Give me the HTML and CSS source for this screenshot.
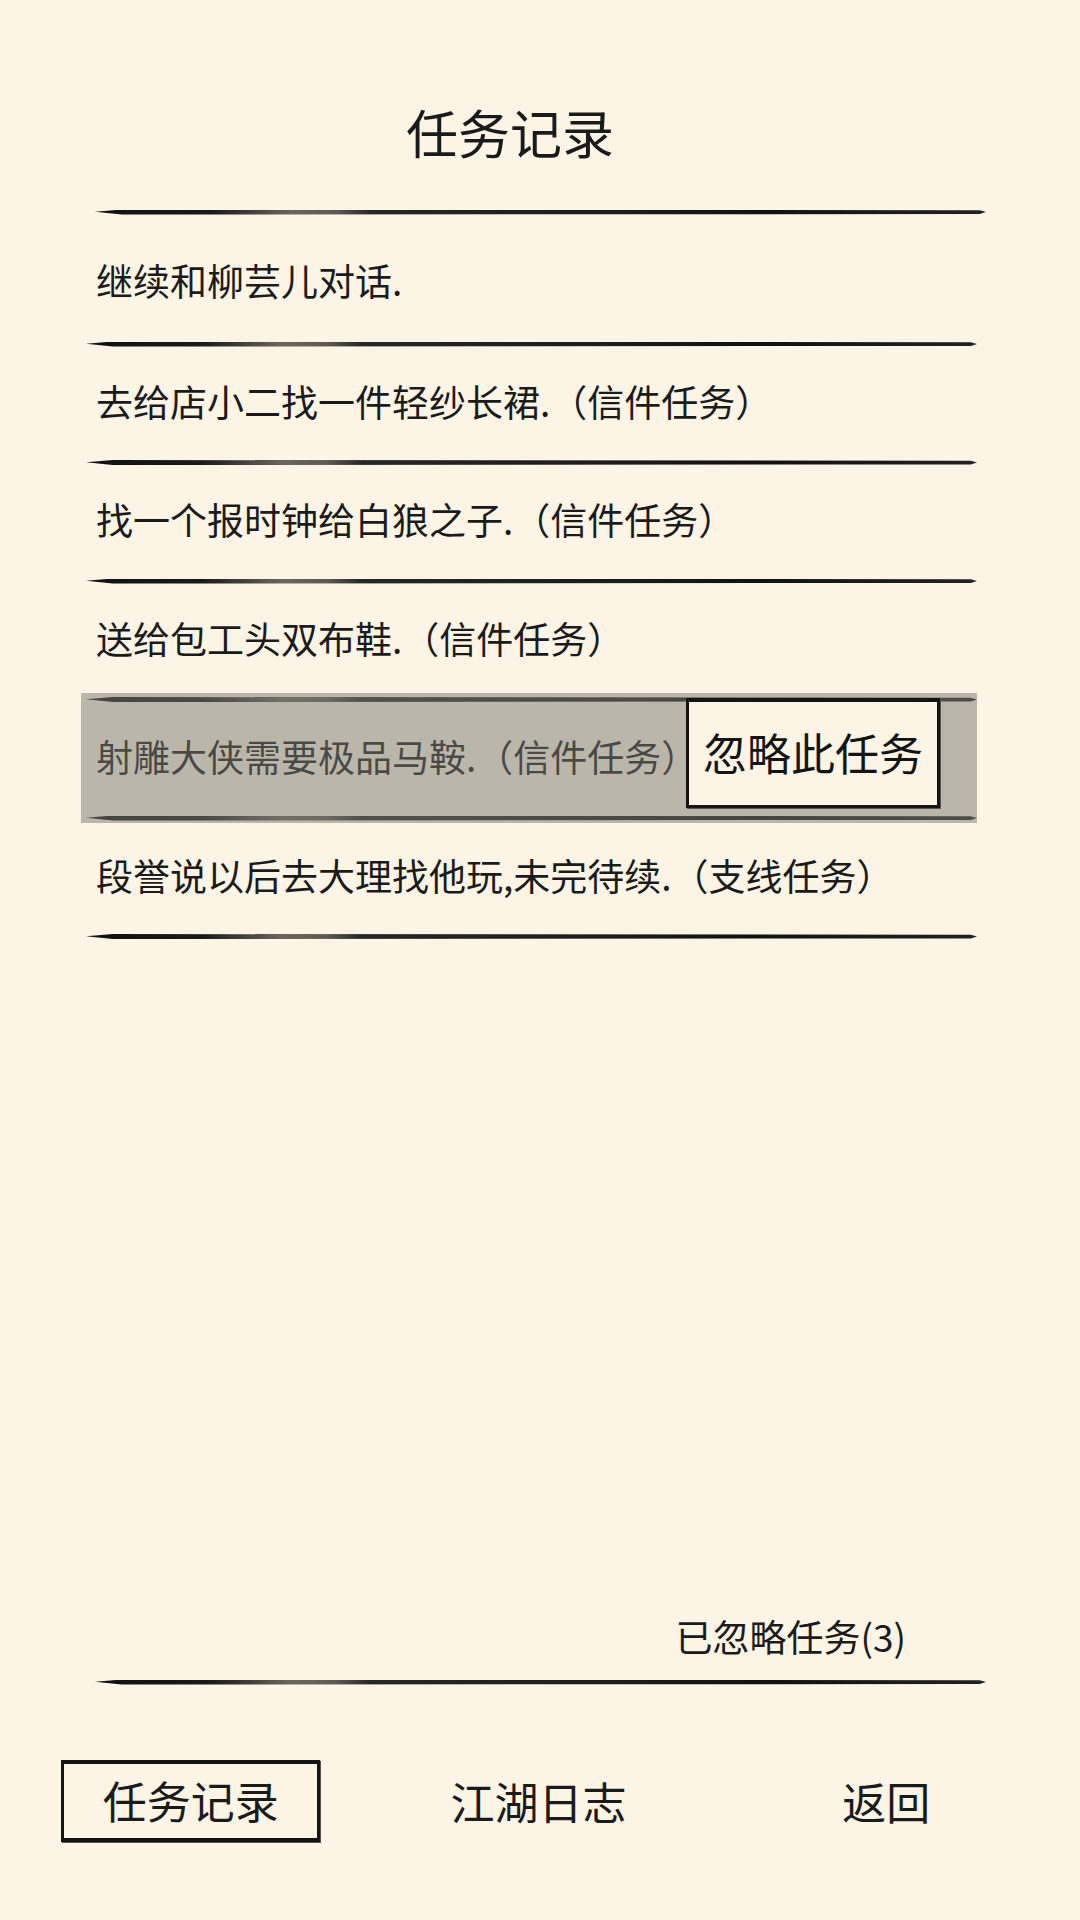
FILE: index.html
```html
<!DOCTYPE html>
<html lang="zh">
<head>
<meta charset="utf-8">
<title>任务记录</title>
<link rel="stylesheet" href="styles.css">
</head>
<body>
<div class="page">
  <header class="header"><h1 class="title">任务记录</h1></header>
  <div class="brush brush-wide"></div>
  <div class="tasks">
    <div class="task task-first">继续和柳芸儿对话.</div>
    <div class="brush"></div>
    <div class="task">去给店小二找一件轻纱长裙.（信件任务）</div>
    <div class="brush"></div>
    <div class="task">找一个报时钟给白狼之子.（信件任务）</div>
    <div class="brush"></div>
    <div class="task">送给包工头双布鞋.（信件任务）</div>
    <div class="brush"></div>
    <div class="task task-selected">射雕大侠需要极品马鞍.（信件任务）<div class="menu">忽略此任务</div></div>
    <div class="brush"></div>
    <div class="task">段誉说以后去大理找他玩,未完待续.（支线任务）</div>
    <div class="brush"></div>
  </div>
  <div class="spacer"></div>
  <div class="ignored">已忽略任务(3)</div>
  <div class="brush brush-wide"></div>
  <nav class="tabs">
    <div class="tab"><span class="tab-label tab-active">任务记录</span></div>
    <div class="tab"><span class="tab-label">江湖日志</span></div>
    <div class="tab"><span class="tab-label">返回</span></div>
  </nav>
</div>
</body>
</html>
```
FILE: styles.css
```css
* { box-sizing: border-box; }
html, body {
  margin: 0;
  padding: 0;
  background: #fcf5e5;
}
body {
  font-family: "Noto Sans CJK SC", "Noto Sans", sans-serif;
  color: #1b1b1b;
}
.page {
  width: 1080px;
  height: 1920px;
  display: flex;
  flex-direction: column;
}
.header {
  height: 209.5px;
  padding-top: 101px;
  padding-right: 60px;
  text-align: center;
}
.title {
  margin: 0;
  font-size: 52px;
  line-height: 62px;
  font-weight: 400;
}
.brush {
  height: 5px;
  background: linear-gradient(90deg, #111 0%, #1a1a1a 13%, #3e3b37 17%, #6a665e 22%, #5e5a53 27%, #262626 31%, #1c1c1c 60%, #111 75%, #222 100%);
  clip-path: polygon(0 45%, 3% 0, 99.3% 15%, 100% 50%, 99.3% 90%, 3% 100%);
}
.brush-wide {
  margin: 0 94px 0 95px;
}
.tasks {
  margin: 0 103px 0 86px;
  display: flex;
  flex-direction: column;
}
.task {
  position: relative;
  height: 113.5px;
  padding-left: 10px;
  padding-bottom: 4px;
  display: flex;
  align-items: center;
  font-size: 37px;
  line-height: 1;
  white-space: nowrap;
}
.task-first {
  height: 127px;
  padding-top: 8px;
}
.task-selected {
  color: #1b1b1b;
}
.task-selected::before {
  content: "";
  position: absolute;
  left: -5px;
  right: 0;
  top: -9px;
  bottom: -7.5px;
  background: rgba(122, 119, 112, 0.5);
  z-index: 1;
}
.menu {
  position: absolute;
  left: 600px;
  top: -4px;
  width: 254px;
  height: 110px;
  background: #fcf5e5;
  border: 3px solid #141414;
  border-top-width: 4px;
  box-shadow: 1px 1px 0 #555;
  display: flex;
  align-items: center;
  justify-content: center;
  padding-bottom: 4px;
  font-size: 44px;
  color: #141414;
  z-index: 2;
}
.spacer { flex: 1; }
.ignored {
  font-size: 37px;
  line-height: 47px;
  text-align: right;
  padding-right: 174px;
  margin-bottom: 20px;
}
.tabs {
  margin-top: 75.5px;
  margin-bottom: 78px;
  padding: 0 20px 0 17px;
  display: grid;
  grid-template-columns: repeat(3, 1fr);
  height: 82px;
}
.tab {
  display: flex;
  align-items: center;
  justify-content: center;
}
.tab-label {
  font-size: 44px;
  line-height: 1;
}
.tab-active {
  display: flex;
  align-items: center;
  justify-content: center;
  width: 259px;
  height: 82px;
  border: 3px solid #141414;
  border-top-width: 4px;
  border-bottom-width: 4px;
  box-shadow: 1px 1px 0 #555;
  padding-bottom: 3px;
}
```
